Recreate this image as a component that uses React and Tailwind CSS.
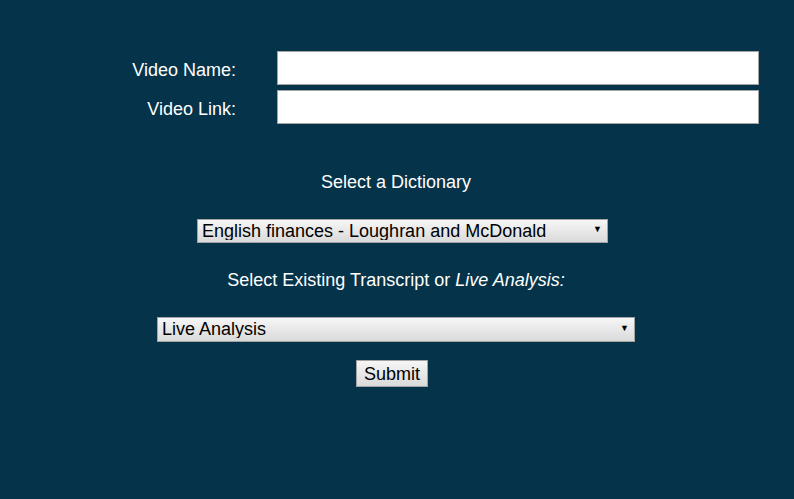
import React, { useState } from "react";

function Select({ value, onChange, options, className }) {
  return (
    <div className={`relative ${className}`}>
      <select
        value={value}
        onChange={(e) => onChange(e.target.value)}
        className="w-full h-full appearance-none border border-[#a3a3a3] bg-gradient-to-b from-[#f6f6f6] to-[#dadada] pl-[4px] pr-6 text-[18px] leading-none text-black outline-none"
      >
        {options.map((o) => (
          <option key={o} value={o}>
            {o}
          </option>
        ))}
      </select>
      <span className="pointer-events-none absolute right-[6px] top-1/2 -translate-y-1/2 text-[9px] text-black">▼</span>
    </div>
  );
}

export default function App() {
  const [name, setName] = useState("");
  const [link, setLink] = useState("");
  const [dictionary, setDictionary] = useState("English finances - Loughran and McDonald");
  const [transcript, setTranscript] = useState("Live Analysis");

  return (
    <div className="w-[794px] h-[499px] bg-[#053349] text-white font-['Liberation_Sans',Arial,sans-serif] text-[18px]">
      <form onSubmit={(e) => e.preventDefault()} className="flex flex-col items-center pt-[51px]">
        {/* --- Name / Link --- */}
        <div className="self-start grid grid-cols-[236px_482px] gap-x-[41px] gap-y-[5px] items-center">
          <label className="text-right mt-[4px]">Video Name:</label>
          <input
            value={name}
            onChange={(e) => setName(e.target.value)}
            className="h-[34px] border border-[#a3a3a3] bg-white text-black px-1 outline-none"
          />
          <label className="text-right mt-[4px]">Video Link:</label>
          <input
            value={link}
            onChange={(e) => setLink(e.target.value)}
            className="h-[34px] border border-[#a3a3a3] bg-white text-black px-1 outline-none"
          />
        </div>

        {/* --- Dictionary --- */}
        <p className="mt-[48px] leading-[21px] ml-[-2px]">Select a Dictionary</p>
        <Select
          value={dictionary}
          onChange={setDictionary}
          options={["English finances - Loughran and McDonald"]}
          className="mt-[25px] w-[411px] h-[24px] ml-[11px]"
        />

        {/* --- Transcript --- */}
        <p className="mt-[28px] leading-[21px] ml-[-2px]">
          Select Existing Transcript or <i>Live Analysis:</i>
        </p>
        <Select
          value={transcript}
          onChange={setTranscript}
          options={["Live Analysis"]}
          className="mt-[25px] w-[478px] h-[25px] ml-[-2px]"
        />

        {/* --- Submit --- */}
        <button
          type="submit"
          className="mt-[19px] w-[72px] h-[27px] ml-[-10px] border border-[#a3a3a3] bg-gradient-to-b from-[#f6f6f6] to-[#dadada] text-black text-[18px] leading-none"
        >
          Submit
        </button>
      </form>
    </div>
  );
}
